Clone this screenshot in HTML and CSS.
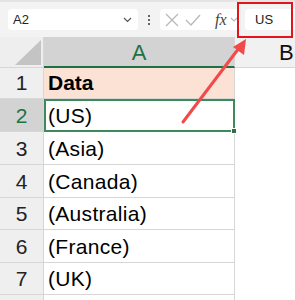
FILE: index.html
```html
<!DOCTYPE html>
<html lang="en-US">
  <head>
    <meta charset="utf-8"/>
    <title>Sheet: formula bar</title>
    <link rel="stylesheet" href="styles.css">
  </head>

  <body>
    <div class="toolbar">
      <div class="namebox">
        <span>A2</span>
        <svg class="chev" width="9" height="6" viewBox="0 0 9 6"><path d="M1 1 L4.5 4.5 L8 1" fill="none" stroke="#555" stroke-width="1.2"/></svg>
      </div>
      <div class="grip"><i></i><i></i><i></i></div>
      <div class="fxbox">
        <svg width="14" height="14" viewBox="0 0 14 14"><path d="M1 1 L13 13 M13 1 L1 13" stroke="#b8b8b8" stroke-width="1.3" fill="none"/></svg>
        <svg width="16" height="14" viewBox="0 0 16 14"><path d="M1 7 L6 12 L15 2" stroke="#b8b8b8" stroke-width="1.3" fill="none"/></svg>
        <span class="fx">fx</span>
        <svg width="8" height="6" viewBox="0 0 8 6"><path d="M1 1 L4 4 L7 1" fill="none" stroke="#b8b8b8" stroke-width="1.1"/></svg>
      </div>
      <div class="formula">US</div>
    </div>

    <div class="sheet">
      <div class="corner"><span class="tri"></span></div>
      <div class="colhead active">A</div>
      <div class="colhead colb">B</div>

      <div class="rowhead">1</div>
      <div class="cell title">Data</div>
      <div class="cell empty"></div>

      <div class="rowhead active">2</div>
      <div class="cell selected">(US)<span class="handle"></span></div>
      <div class="cell empty"></div>

      <div class="rowhead">3</div>
      <div class="cell">(Asia)</div>
      <div class="cell empty"></div>

      <div class="rowhead">4</div>
      <div class="cell">(Canada)</div>
      <div class="cell empty"></div>

      <div class="rowhead">5</div>
      <div class="cell">(Australia)</div>
      <div class="cell empty"></div>

      <div class="rowhead">6</div>
      <div class="cell">(France)</div>
      <div class="cell empty"></div>

      <div class="rowhead">7</div>
      <div class="cell">(UK)</div>
      <div class="cell empty"></div>

      <div class="rowhead"></div>
      <div class="cell"></div>
      <div class="cell empty"></div>
    </div>

    <!-- callout pointing at the formula bar -->
    <div class="callout"></div>
    <svg class="arrow" width="295" height="300" viewBox="0 0 295 300">
      <line x1="183" y1="122" x2="239" y2="48" stroke="#f24a4a" stroke-width="3" stroke-linecap="round"/>
      <polygon points="246,39 244,55 233,47" fill="#f24a4a"/>
    </svg>
  </body>
</html>
```

FILE: styles.css
```css
body {
  margin: 0;
  background-color: #fff;
  font-family: "Liberation Sans", Arial, sans-serif;
  color: #000;
  width: 295px;
  height: 300px;
  overflow: hidden;
  position: relative;
}

.toolbar {
  height: 37px;
  background-color: #f3f3f3;
  border-top: 2px solid #e4e4e4;
  box-sizing: border-box;
  display: flex;
  align-items: flex-start;
  padding-top: 7px;
}

.namebox {
  margin-left: 8px;
  width: 130px;
  height: 21px;
  background-color: #fff;
  border-radius: 4px;
  box-sizing: border-box;
  display: flex;
  align-items: center;
  justify-content: space-between;
  padding: 0 6px 0 5px;
  font-size: 13px;
  color: #222;
}

.grip {
  width: 22px;
  height: 21px;
  display: flex;
  flex-direction: column;
  align-items: center;
  justify-content: center;
  gap: 2px;
}

.grip i {
  width: 2px;
  height: 2px;
  background-color: #666;
}

.fxbox {
  width: 80px;
  height: 21px;
  background-color: #fff;
  border-radius: 4px;
  display: flex;
  align-items: center;
  gap: 6px;
  padding-left: 5px;
  box-sizing: border-box;
}

.fx {
  font-family: "Liberation Serif", serif;
  font-style: italic;
  font-size: 16px;
  color: #444;
  margin-left: 8px;
  margin-right: -3px;
}

.formula {
  margin-left: 5px;
  flex: 1;
  height: 21px;
  background-color: #fff;
  border-radius: 4px 0 0 4px;
  font-size: 13px;
  color: #222;
  line-height: 21px;
  padding-left: 10px;
}

.sheet {
  display: grid;
  grid-template-columns: 44px 191px 1fr;
  grid-template-rows: 31px 31px 33px 33px 33px 32px 33px 32px 20px;
}

.sheet > div {
  border-right: 1px solid #d6d6d6;
  border-bottom: 1px solid #d6d6d6;
  box-sizing: border-box;
}

.corner {
  background-color: #eeeeee;
  position: relative;
}

.tri {
  position: absolute;
  right: 2px;
  bottom: 2px;
  width: 26px;
  height: 25px;
  background-color: #c4c4c4;
  clip-path: polygon(100% 0, 100% 100%, 0 100%);
}

.colhead {
  background-color: #f1f1f1;
  font-size: 22px;
  text-align: center;
  line-height: 32px;
  color: #111;
}

.colhead.active {
  background-color: #d3d3d3;
  color: #1e7145;
  border-bottom: 2px solid #1e7145;
}

.colhead.colb {
  border-right: none;
  text-align: left;
  padding-left: 44px;
}

.rowhead {
  background-color: #efefef;
  font-size: 21px;
  text-align: center;
  display: flex;
  align-items: flex-end;
  justify-content: center;
  padding-bottom: 3px;
  color: #222;
}

.rowhead.active {
  background-color: #d3d3d3;
  color: #1e7145;
}

.cell {
  font-size: 21px;
  letter-spacing: 0.3px;
  display: flex;
  align-items: flex-end;
  padding: 0 0 3px 4px;
}

.cell.empty {
  border-right: none;
  border-bottom-color: transparent;
}

.title {
  background-color: #fbe2d5;
  font-weight: bold;
  letter-spacing: 0;
}

.selected {
  position: relative;
  outline: 2px solid #3f8a5c;
  outline-offset: -2px;
}

.handle {
  position: absolute;
  right: -3px;
  bottom: -3px;
  width: 6px;
  height: 6px;
  background-color: #2f6e47;
  border: 1px solid #fff;
  box-sizing: border-box;
}

.callout {
  position: absolute;
  left: 237px;
  top: 2px;
  width: 56px;
  height: 36px;
  border: 2px solid #e5141b;
  box-sizing: border-box;
}

.arrow {
  position: absolute;
  left: 0;
  top: 0;
}
```
